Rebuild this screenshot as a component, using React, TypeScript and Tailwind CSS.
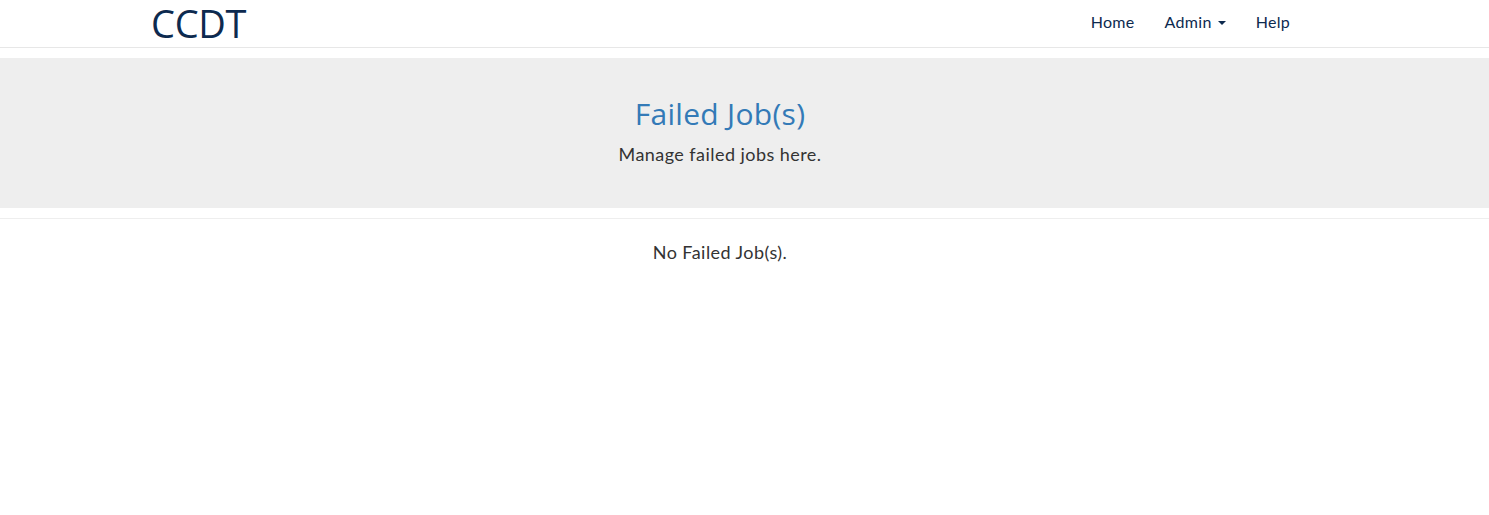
import React from "react";

export default function App() {
  const font = { fontFamily: "Lato, 'Noto Sans', sans-serif" };
  return (
    <div className="min-h-[515px] bg-white" style={font}>
      <nav className="h-[48px] border-b border-[#e7e7e7] bg-white">
        <div className="flex h-[47px] w-[1440px] items-center justify-between pl-[151px] pr-[150px]">
          <a className="text-[38px] leading-[47px] tracking-[-0.3px] text-[#0d2a4f]" style={{ fontFamily: "'Open Sans', sans-serif" }}>CCDT</a>
          <ul className="flex items-center gap-[30px] pb-[3px] text-[16px] tracking-[0.3px] text-[#0d2a4f]">
            <li>Home</li>
            <li className="flex items-center gap-[6px]">
              Admin
              <span className="mt-[2px] inline-block h-0 w-0 border-x-[4px] border-t-[4px] border-x-transparent border-t-[#0d2a4f]" />
            </li>
            <li>Help</li>
          </ul>
        </div>
      </nav>
      <div className="mt-[10px] h-[150px] bg-[#eeeeee]">
        <div className="flex w-[1440px] flex-col items-center pt-[36px]">
          <h1 className="text-[30px] leading-[40px] tracking-[0.3px] text-[#337ab7]" style={{ fontFamily: "'Open Sans', sans-serif" }}>Failed Job(s)</h1>
          <p className="mt-[8px] text-[18px] leading-[24px] tracking-[0.45px] text-[#333333]">Manage failed jobs here.</p>
        </div>
      </div>
      <hr className="mt-[10px] border-t border-[#eeeeee]" />
      <p className="mt-[21px] w-[1440px] text-center text-[18px] leading-[24px] tracking-[0.45px] text-[#333333]">No Failed Job(s).</p>
    </div>
  );
}
